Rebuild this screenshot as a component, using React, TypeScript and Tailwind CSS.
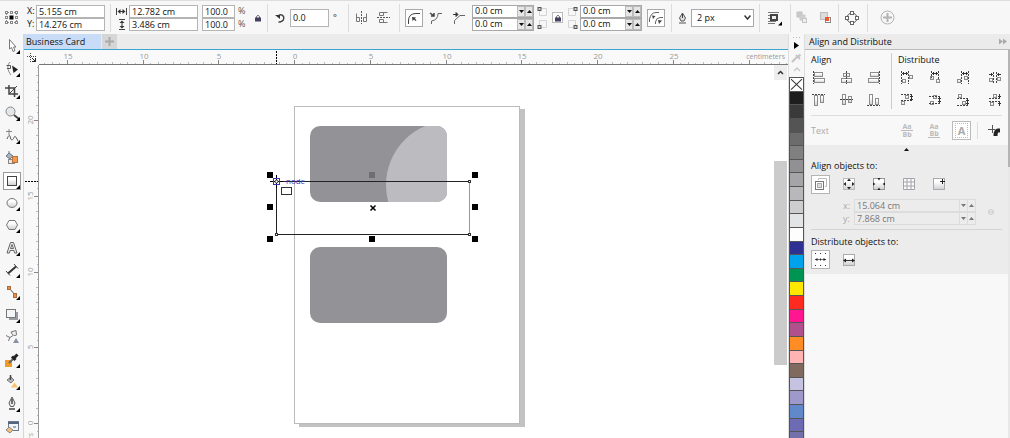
import React from "react";

type Box = [number, number, number, number];

interface Glyph {
    label: string;
    guide: string;
    boxes: Box[];
    arrows?: string;
}

const alignGlyphs: Glyph[] = [
    { label: "Align left", guide: "M1.5 0V13", boxes: [[2.5, 1.5, 8, 4], [2.5, 7.5, 10, 4]] },
    { label: "Align centers horizontally", guide: "M6.5 0V13", boxes: [[3.5, 2.5, 6, 3], [1.5, 7.5, 10, 4]] },
    { label: "Align right", guide: "M12.5 0V13", boxes: [[3.5, 1.5, 8, 4], [1.5, 7.5, 10, 4]] },
    { label: "Align top", guide: "M0 1.5H13", boxes: [[2.5, 2.5, 3, 10], [8.5, 2.5, 3, 7]] },
    { label: "Align centers vertically", guide: "M0 6.5H13", boxes: [[2.5, 1.5, 3, 10], [8.5, 3.5, 3, 6]] },
    { label: "Align bottom", guide: "M0 12.5H13", boxes: [[2.5, 1.5, 3, 10], [8.5, 5.5, 3, 6]] },
];

const distributeGlyphs: Glyph[] = [
    { label: "Distribute left", guide: "M1.5 0V13M8.5 0V13", boxes: [[2.5, 8.5, 3, 3], [9.5, 4.5, 3, 3]], arrows: "M2 2.5H8M3.5 1V4M6.5 1V4" },
    { label: "Distribute centers horizontally", guide: "M3.5 0V7M10.5 0V9", boxes: [[2.5, 5.5, 3, 3], [8.5, 8.5, 3, 3]], arrows: "M4 2.5H10M5.5 1V4M8.5 1V4" },
    { label: "Distribute right", guide: "M5.5 0V13M12.5 0V13", boxes: [[1.5, 8.5, 3, 3], [8.5, 5.5, 3, 3]], arrows: "M6 2.5H12M7.5 1V4M10.5 1V4" },
    { label: "Distribute spacing horizontally", guide: "M5.5 1V12M8.5 1V12", boxes: [[1.5, 7.5, 3, 3], [9.5, 6.5, 3, 3]], arrows: "M1 3.5H5M3.5 2V5M9 3.5H13M10.5 2V5" },
    { label: "Distribute top", guide: "M1 1.5H13M1 7.5H13", boxes: [[5.5, 2.5, 3, 3], [1.5, 8.5, 3, 3]], arrows: "M11.5 2V8M10 3.5H13M10 6.5H13" },
    { label: "Distribute centers vertically", guide: "M1 3.5H13M1 10.5H13", boxes: [[5.5, 2.5, 3, 3], [2.5, 8.5, 3, 3]], arrows: "M11.5 4V10M10 5.5H13M10 8.5H13" },
    { label: "Distribute bottom", guide: "M1 5.5H13M1 12.5H13", boxes: [[2.5, 1.5, 3, 3], [6.5, 8.5, 3, 3]], arrows: "M11.5 6V12M10 7.5H13M10 10.5H13" },
    { label: "Distribute spacing vertically", guide: "M1 5.5H13M1 8.5H13", boxes: [[5.5, 1.5, 3, 3], [2.5, 9.5, 3, 3]], arrows: "M11.5 1V5M10 3.5H13M11.5 9V13M10 10.5H13" },
];

const swatches = [
    "#1e1e1e", "#3a3a3a", "#545454", "#6c6c6c", "#808080", "#919193", "#a5a5a7", "#b8b8ba", "#cdcdcf",
    "#e3e4e6", "#fdfdfd", "#2e3192", "#00a2ec", "#009453", "#ffe800", "#ff2a20", "#ff1690", "#b0508c",
    "#ff8c24", "#ffb3b3", "#806a60", "#c6c2e2", "#9f99cb", "#6288cc", "#6c6bb4", "#7271ac",
];

const Svg = ({ w, h, children, className }: { w: number; h: number; children: React.ReactNode; className?: string }) => (
    <svg width={w} height={h} viewBox={`0 0 ${w} ${h}`} fill="none" stroke="#555" className={className} aria-hidden="true">
        {children}
    </svg>
);

const GlyphIcon = ({ glyph }: { glyph: Glyph }) => (
    <Svg w={14} h={14}>
        {glyph.boxes.map(([x, y, w, h], i) => (
            <rect key={i} x={x} y={y} width={w} height={h} fill="url(#toolFill)" stroke="#8c8c8c" />
        ))}
        <path d={glyph.guide} stroke="#444" strokeDasharray="2 1" />
        {glyph.arrows && <path d={glyph.arrows} stroke="#333" />}
    </Svg>
);

/* Tool drawings, all on a 16px grid */
const tools: { label: string; flyout?: boolean; active?: boolean; art: React.ReactNode }[] = [
    { label: "Pick", flyout: true, art: <path d="M5.5 1.5V11L7.5 9.500L9 13.500L11 12.500L9.500 9H12Z" fill="#fff" stroke="#777" /> },
    { label: "Shape", flyout: true, art: <><path d="M6 1C3 4 3 9 7 14" stroke="#888" /><path d="M2.500 4.500H6.500V7.500H3" stroke="#555" /><path d="M8 4.500L14 8.500L9.500 12Z" fill="#222" stroke="none" /></> },
    { label: "Crop", flyout: true, art: <><path d="M1 5H10.500V14M5 2V11H14" stroke="#444" strokeWidth="1.500" /><path d="M5 11L13 3" stroke="#444" /></> },
    { label: "Zoom", flyout: true, art: <><circle cx="6.500" cy="6.500" r="4.500" fill="#e4e7ea" stroke="#888" /><path d="M10 10L15 14" stroke="#444" strokeWidth="2" /></> },
    { label: "Freehand", flyout: true, art: <><path d="M2 3.500H8M5 1V7" stroke="#888" /><path d="M3 11C5 6 6 7 6.500 10S9 12 10 9.500S12 9 14 13" stroke="#555" /></> },
    { label: "Smart fill", art: <><path d="M2 6L5 3L9 6L6 9Z" fill="#a9b4c0" stroke="#678" /><path d="M5 3V1" stroke="#678" /><rect x="4.500" y="9.500" width="6" height="4" fill="#f5e3d3" stroke="#888" /><rect x="8.500" y="6.500" width="5" height="6" fill="#f29a50" stroke="#b8703c" /></> },
    { label: "Rectangle", flyout: true, active: true, art: <rect x="3.500" y="3.500" width="9" height="9" fill="url(#toolFill)" stroke="#444" /> },
    { label: "Ellipse", flyout: true, art: <ellipse cx="8" cy="8" rx="5" ry="4.500" fill="url(#toolFill)" stroke="#777" /> },
    { label: "Polygon", flyout: true, art: <path d="M2.500 8L5 3.500H11L13.500 8L11 12.500H5Z" fill="url(#toolFill)" stroke="#777" /> },
    { label: "Text", flyout: true, art: <path d="M3 13L6.500 2.500H9.500L13 13H10.500L10 10.500H6L5.500 13ZM6.500 8.500H9.500L8 4.500Z" fill="#eee" stroke="#666" /> },
    { label: "Parallel dimension", flyout: true, art: <><path d="M4 11.500L12 4.500" stroke="#333" strokeWidth="2" /><path d="M2 9L6 13.500M10 2L14 6.500" stroke="#444" /></> },
    { label: "Connector", flyout: true, art: <><path d="M6 5L11 11" stroke="#555" /><rect x="3.500" y="2.500" width="3" height="3" fill="#f08a3c" stroke="#a86a40" /><rect x="9.500" y="9.500" width="3" height="4" fill="#f08a3c" stroke="#a86a40" /></> },
    { label: "Drop shadow", flyout: true, art: <><path d="M5 5H14V13H5Z" fill="#9a9aa2" stroke="none" /><rect x="2.500" y="2.500" width="9" height="8" fill="#f4f5f8" stroke="#777" /></> },
    { label: "Transparency", art: <><path d="M7 3L12 1.500L12.500 6Q9 8 7 3ZM9 6.500L6 8.500M2 6.500L6 8.500L4.500 12" stroke="#777" fill="#eee" /><path d="M9 14L12 9L15 14Z" fill="#8792a4" stroke="none" /></> },
    { label: "Color eyedropper", flyout: true, art: <><rect x="1" y="8" width="7" height="7" fill="#f09a28" stroke="none" /><path d="M5 11L10 6" stroke="#667" strokeWidth="2" /><path d="M8 4.500L11.500 8M10 6L13.500 2.500" stroke="#222" strokeWidth="3" /></> },
    { label: "Interactive fill", flyout: true, art: <><path d="M3 6L7 3L10 6L7 9Z" fill="#b9bdc0" stroke="#777" /><path d="M6.500 1V6" stroke="#444" strokeWidth="1.500" /><path d="M7 13.500L10.500 8.500L14 13.500Z" fill="#f7c469" stroke="none" /></> },
    { label: "Outline pen", flyout: true, art: <><path d="M8 1L5 7L6.500 10.500H9.500L11 7Z" fill="#eee" stroke="#555" /><path d="M8 3V8M5 13H11" stroke="#444" strokeWidth="1.500" /></> },
    { label: "Edit fill", art: <><rect x="4.500" y="2.500" width="10" height="9" fill="#f2f4f8" stroke="#6b7a91" /><path d="M4 4H15" stroke="#56657e" strokeWidth="2" /><path d="M9 8H12" stroke="#56657e" /><path d="M2 11L5 8L9 11L6 14Z" fill="#f4bd75" stroke="#888" /></> },
];

const Arrow = ({ up }: { up?: boolean }) => (
    <svg width="5" height="3" viewBox="0 0 5 3" aria-hidden="true">
        <path d={up ? "M0 3L2.500 0L5 3Z" : "M0 0L2.500 3L5 0Z"} fill="currentColor" />
    </svg>
);

const Field = ({ label, value, className }: { label: string; value: string; className: string }) => (
    <input aria-label={label} defaultValue={value} className={`min-w-0 border border-[#b4b4b4] bg-white px-[2px] outline-none ${className}`} />
);

const SpinField = ({ label, value }: { label: string; value: string }) => (
    <div className="flex h-[13px] w-[62px] items-center border border-[#a8a8a8] bg-white">
        <input aria-label={label} defaultValue={value} className="min-w-0 flex-1 pl-[2px] outline-none" />
        <button aria-label={`Decrease ${label}`} className="grid h-full w-[8px] place-items-center border border-[#bbb] bg-[#e6e6e6]"><Arrow /></button>
        <button aria-label={`Increase ${label}`} className="grid h-full w-[8px] place-items-center border border-[#bbb] bg-[#e6e6e6]"><Arrow up /></button>
    </div>
);

const Group = ({ className, children }: { className: string; children: React.ReactNode }) => (
    <div className={`flex h-[28px] shrink-0 items-center border-r border-[#dcdcdc] ${className}`}>{children}</div>
);

const Lock = () => (
    <Svg w={8} h={8}>
        <path d="M2.500 4V2.500Q4 0 5.500 2.500V4" stroke="#666" />
        <rect x="1" y="3.500" width="6" height="4" fill="#45405f" stroke="none" />
    </Svg>
);

const Corners = ({ flip }: { flip?: boolean }) => (
    <Svg w={10} h={24} className={flip ? "-scale-x-100" : ""}>
        <path d="M3 2.500H9.500V9.500H2.500V5M2.500 19V14.500H9.500V21.500H5" stroke="#d4d4d4" />
        <rect x="1" y="1.500" width="3" height="3" fill="#ccc" stroke="#555" />
        <rect x="1" y="19.500" width="3" height="3" fill="#ccc" stroke="#555" />
    </Svg>
);

const PropertyBar = () => (
    <header className="flex h-[34px] shrink-0 items-center overflow-hidden border-t border-[#dedede] bg-[#f7f7f7]">
        <Group className="w-[111px] gap-[8px] pl-[4px]">
            <button aria-label="Object origin">
                <Svg w={15} h={15}>
                    <path d="M2 2.500H13M2 12.500H13M2.500 2V13M12.500 2V13" stroke="#888" strokeDasharray="1 1" />
                    {[1.5, 6.5, 11.5].map((x) => [1.5, 6.5, 11.5].map((y) => (
                        <rect key={`${x}-${y}`} x={x} y={y} width="2" height="2" fill="#fff" stroke="#888" />
                    )))}
                    <rect x="5.500" y="5.500" width="4" height="4" fill="#000" stroke="none" />
                </Svg>
            </button>
            <div className="grid grid-cols-[9px_69px] items-center">
                <span aria-hidden="true">X:</span><Field label="X position" value="5.155 cm" className="h-[13px]" />
                <span aria-hidden="true">Y:</span><Field label="Y position" value="14.276 cm" className="h-[13px]" />
            </div>
        </Group>
        <Group className="w-[157px] pl-[5px]">
            <div className="grid grid-cols-[13px_69px] items-center">
                <Svg w={11} h={9}><path d="M.5 1V8M10.500 1V8" stroke="#444" /><path d="M1.500 4.500L4.500 2V7ZM9.500 4.500L6.500 2V7Z" fill="#333" stroke="none" /><path d="M3 4.500H8" stroke="#333" /></Svg>
                <Field label="Object width" value="12.782 cm" className="h-[13px]" />
                <Svg w={11} h={11}><path d="M3 .5H9M3 10.500H9" stroke="#444" /><path d="M6 1.500L3.500 4H8.500ZM6 9.500L3.500 7H8.500Z" fill="#333" stroke="none" /><path d="M6 3V8" stroke="#333" /></Svg>
                <Field label="Object height" value="3.486 cm" className="h-[13px]" />
            </div>
            <div className="ml-[4px] grid grid-cols-[33px_8px] items-center gap-x-[3px]">
                <Field label="Horizontal scale" value="100.0" className="h-[13px]" /><span className="text-[#555]">%</span>
                <Field label="Vertical scale" value="100.0" className="h-[13px]" /><span className="text-[#555]">%</span>
            </div>
            <button aria-label="Lock ratio" className="ml-[8px]"><Lock /></button>
        </Group>
        <Group className="w-[81px] gap-[4px] pl-[7px]">
            <Svg w={11} h={12}><path d="M2.500 4.500Q6 1 8.500 4.500Q10 8.500 5 10H3.500" stroke="#444" strokeWidth="1.500" /><path d="M0 3H5V7Z" fill="#333" stroke="none" /></Svg>
            <Field label="Angle of rotation" value="0.0" className="h-[18px] w-[39px]" />
            <span>°</span>
        </Group>
        <Group className="w-[51px] gap-[9px] pl-[6px]">
            <button aria-label="Mirror horizontally"><Svg w={13} h={13}><path d="M1.500 2.500V10.500H4.500V6.500M8.500 6.500V10.500H11.500V2.500M1.500 6.500H4.500M8.500 6.500H11.500" stroke="#777" /><path d="M6.500 0V13" strokeDasharray="2 1" /></Svg></button>
            <button aria-label="Mirror vertically"><Svg w={13} h={13}><path d="M10.500 1.500H2.500V4.500H6.500M6.500 8.500H2.500V11.500H10.500M6.500 1.500V4.500M6.500 8.500V11.500" stroke="#777" /><path d="M0 6.500H13" strokeDasharray="2 1" /></Svg></button>
        </Group>
        <Group className="w-[272px] pl-[5px]">
            <button aria-label="Round corner" className="grid size-[18px] place-items-center border border-[#a8a8a8] bg-white">
                <Svg w={14} h={14}><path d="M1.500 13V9Q2 2.500 9 2.500H13" stroke="#444" /><path d="M5 6L9 6.500L8 7.500L9.500 9.500L8.500 10L7 8.500L5.500 10Z" fill="#444" stroke="none" /></Svg>
            </button>
            <button aria-label="Scalloped corner" className="ml-[6px]">
                <Svg w={14} h={14}><path d="M2.500 13V10Q9 9 9 2.500H13" stroke="#666" /><path d="M1 2L5 5M5 2V5H2" stroke="#444" strokeWidth="1.500" /></Svg>
            </button>
            <button aria-label="Chamfered corner" className="ml-[9px]">
                <Svg w={14} h={14}><path d="M2.500 13V9.500L8 4.500H13" stroke="#666" /><path d="M1 3.500H5M4 1.500L6 3.500L4 5.500Z" fill="#333" stroke="#333" /></Svg>
            </button>
            <div className="ml-[6px]">
                <SpinField label="top left radius" value="0.0 cm" />
                <SpinField label="bottom left radius" value="0.0 cm" />
            </div>
            <div className="ml-[3px]"><Corners /></div>
            <button aria-label="Edit corners together" className="ml-[5px] grid size-[11px] place-items-center border border-[#bbb] bg-white"><Lock /></button>
            <div className="ml-[5px]"><Corners flip /></div>
            <div className="ml-[2px]">
                <SpinField label="top right radius" value="0.0 cm" />
                <SpinField label="bottom right radius" value="0.0 cm" />
            </div>
            <button aria-label="Relative corner scaling" className="ml-[5px] grid size-[18px] place-items-center border border-[#a8a8a8] bg-white">
                <Svg w={16} h={16}><path d="M1.500 12V9Q3 2.500 8 2.500H11M7.500 14V12Q8 8 12 7.500H15" stroke="#666" /><path d="M4 5.500L7.500 6L5 9ZM10 10L14 10.500L11 14Z" fill="#444" stroke="none" /></Svg>
            </button>
        </Group>
        <Group className="w-[88px] gap-[4px] pl-[6px]">
            <Svg w={9} h={12}><path d="M4.500 1L1.500 6L3 9H6L7.500 6ZM1 11H8" fill="#ddd" stroke="#555" /><path d="M4.500 2V6" stroke="#444" /></Svg>
            <div className="grid items-center">
                <select aria-label="Outline width" className="col-start-1 row-start-1 h-[18px] w-[63px] appearance-none border border-[#a8a8a8] bg-white pl-[5px]">
                    <option>2 px</option>
                </select>
                <Svg w={7} h={5} className="pointer-events-none col-start-1 row-start-1 mr-[3px] justify-self-end"><path d="M.5 .5L3.500 4L6.500 .5" stroke="#333" strokeWidth="1.500" /></Svg>
            </div>
        </Group>
        <Group className="w-[31px] pl-[7px]">
            <button aria-label="Wrap text">
                <Svg w={15} h={16}><path d="M1 2.500H12M1 5.500H3M1 8.500H3M1 11.500H9M1 13.500H8" stroke="#777" /><rect x="4" y="5" width="6" height="5" fill="#eee" stroke="#444" strokeWidth="2" /><path d="M15 11.500V15.500H11Z" fill="#000" stroke="none" /></Svg>
            </button>
        </Group>
        <Group className="w-[48px] gap-[11px] pl-[5px]">
            <button aria-label="To front" disabled><Svg w={12} h={13}><rect x="1" y="1" width="5" height="5" fill="#c8c8c8" stroke="#c4c4c4" /><path d="M4 4H9V9H4Z" fill="#d0d0d0" stroke="#c8c8c8" /><rect x="6.500" y="7.500" width="4" height="4" fill="#eee" stroke="#c4c4c4" /></Svg></button>
            <button aria-label="To back"><Svg w={13} h={13}><rect x="1.500" y="1.500" width="7" height="7" fill="#ddd" stroke="#bbb" /><rect x="6.500" y="6.500" width="5" height="5" fill="#fff" stroke="#888" /><rect x="6" y="6" width="4" height="4" fill="#f0562c" stroke="none" /></Svg></button>
        </Group>
        <Group className="w-[29px] pl-[6px]">
            <button aria-label="Convert to curves"><Svg w={14} h={14}><circle cx="7" cy="7" r="5" stroke="#555" />{[[7, 2], [12, 7], [7, 12], [2, 7]].map(([x, y]) => <rect key={`${x}${y}`} x={x - 1.5} y={y - 1.5} width="3" height="3" fill="#fff" stroke="#666" />)}</Svg></button>
        </Group>
        <button aria-label="Customize" className="ml-[12px]"><Svg w={15} h={15}><circle cx="7.500" cy="7.500" r="6.500" stroke="#b4b4b4" /><path d="M7.500 3V12M3 7.500H12" stroke="#b4b4b4" strokeWidth="2" /></Svg></button>
    </header>
);

const Toolbox = () => (
    <nav aria-label="Toolbox" className="flex w-[24px] shrink-0 flex-col border-r border-[#d6d6d6] bg-[#f7f7f7] pt-px">
        {tools.map((tool) => (
            <div key={tool.label} className="flex min-h-0 flex-1 items-center pl-[3px]">
                <button aria-label={tool.label} className={`flex h-[18px] w-[18px] items-center border ${tool.active ? "border-[#999] bg-white" : "border-transparent"}`}>
                    <Svg w={16} h={16} className="shrink-0">
                        {tool.art}
                        {tool.flyout && <path d="M16 12V16H12Z" fill="#000" stroke="none" />}
                    </Svg>
                </button>
            </div>
        ))}
    </nav>
);

/* One tick per half centimetre; the long ones and their numbers come every five centimetres */
const CM = 15.15;
const ticksFrom = (first: number, count: number) => Array.from({ length: count }, (_, i) => first + i / 2);

const TopRuler = () => (
    <svg className="h-[14px] min-w-0 flex-1 border-b border-[#777] bg-[#f9f9f9]" aria-hidden="true">
        {ticksFrom(-16.5, 99).map((cm) => (
            <path key={cm} d={`M${Math.round(255 + cm * CM) + 0.5} ${cm % 5 === 0 ? 9 : cm % 1 === 0 ? 11 : 12}V13`} stroke={cm % 5 === 0 ? "#888" : "#bbb"} />
        ))}
        {[-15, -10, -5, 0, 5, 10, 15, 20, 25].map((cm) => (
            <text key={cm} x={Math.round(256 + cm * CM)} y="8" textAnchor="middle" fontSize="8" fill="#999">{Math.abs(cm)}</text>
        ))}
        <text x="746" y="8" textAnchor="end" fontSize="7" fill="#999">centimeters</text>
        <path d="M237.500 0V13" stroke="#000" strokeDasharray="2 1" />
    </svg>
);

const SideRuler = () => (
    <svg className="h-full w-[15px] shrink-0 border-r border-[#999] bg-[#f9f9f9]" aria-hidden="true">
        {ticksFrom(-1, 50).map((cm) => (
            <path key={cm} d={`M${cm % 5 === 0 ? 10 : cm % 1 === 0 ? 12 : 13} ${Math.round(358 - cm * CM) + 0.5}H14`} stroke={cm % 5 === 0 ? "#888" : "#bbb"} />
        ))}
        {[20, 15, 10, 5, 0].map((cm) => (
            <text key={cm} transform={`translate(9 ${Math.round(358 - cm * CM)}) rotate(-90)`} textAnchor="middle" fontSize="8" fill="#999">{cm}</text>
        ))}
        <text transform="translate(9 368) rotate(-90)" textAnchor="end" fontSize="7" fill="#999">centimeters</text>
        <path d="M1 116.500H14" stroke="#000" strokeDasharray="2 1" />
    </svg>
);

const Canvas = () => (
    <svg className="h-full min-w-0 flex-1 bg-white" role="img" aria-label="Business card drawing">
        <clipPath id="card"><rect x="271" y="61" width="137" height="76" rx="10" /></clipPath>
        <rect x="260" y="44" width="226" height="318" fill="#c2c2c2" />
        <rect x="255.500" y="41.500" width="225" height="317" fill="#fff" stroke="#bbb" />
        <g clipPath="url(#card)">
            <rect x="271" y="61" width="137" height="76" fill="#939297" />
            <circle cx="411" cy="120" r="64" fill="#bcbbbf" />
        </g>
        <rect x="271" y="182" width="137" height="76" rx="10" fill="#939297" />
        <path d="M431 116.500H237.500V169.500H431" fill="none" stroke="#222" />
        <path d="M430.500 117V169" stroke="#999" />
        {[231, 333, 436].map((x) => [110, 142, 174].map((y) => (
            x === 333 && y === 142 ? null : <rect key={`${x}-${y}`} x={x - 3} y={y - 3} width="6" height="6" fill={x === 333 && y === 110 ? "#6f6e72" : "#000"} />
        )))}
        <path d="M331.500 140.500L336.500 145.500M336.500 140.500L331.500 145.500" stroke="#000" strokeWidth="1.500" />
        {[[430.5, 116.5], [237.5, 169.5], [430.5, 169.5]].map(([x, y]) => (
            <rect key={`${x}-${y}`} x={x - 1} y={y - 1} width="2" height="2" fill="#fff" stroke="#333" />
        ))}
        <path d="M231 116.500H244M237.500 110V123" stroke="#000" />
        <rect x="234.500" y="113.500" width="6" height="6" fill="none" stroke="#3a36b8" />
        <circle cx="237.500" cy="116.500" r="1.500" fill="#fff" stroke="#333" />
        <rect x="242.500" y="122.500" width="10" height="7" fill="#fff" stroke="#333" />
        <text x="247" y="119" fontSize="8" fill="#3a36b8">node</text>
    </svg>
);

const Palette = () => (
    <div className="flex w-[17px] shrink-0 flex-col items-center overflow-hidden border-x border-[#ddd] bg-[#f7f7f7]">
        <div className="flex h-[43px] shrink-0 flex-col items-center justify-between pt-[3px] pb-[5px]">
            <Svg w={10} h={1}><path d="M1 .5H9" stroke="#bbb" strokeDasharray="1 2" /></Svg>
            <button aria-label="Palette menu"><Svg w={6} h={7}><path d="M0 0L5 3.500L0 7Z" fill="#000" stroke="none" /></Svg></button>
            <Svg w={11} h={10}><path d="M1 9L6 4" stroke="#c4c4c4" strokeWidth="2" /><path d="M5 2L9 6M7 4L9.500 1.500" stroke="#c4c4c4" strokeWidth="2" /></Svg>
            <button aria-label="Scroll palette up"><Svg w={8} h={5}><path d="M1 4L4 1L7 4" stroke="#ccc" strokeWidth="1.500" /></Svg></button>
        </div>
        <div className="-mb-2 flex min-h-0 w-full flex-1 flex-col border-x border-[#555] bg-[#555]">
            <button aria-label="No color" className="min-h-0 flex-1 border-y border-[#555] bg-white">
                <svg className="size-full" viewBox="0 0 13 12" preserveAspectRatio="none" aria-hidden="true"><path d="M1 1L12 11M12 1L1 11" stroke="#333" /></svg>
            </button>
            {swatches.map((color) => (
                <button key={color} aria-label={color} className="min-h-0 flex-1 border-b border-[#555]" style={{ backgroundColor: color }} />
            ))}
        </div>
    </div>
);

const DimSpin = ({ axis, value }: { axis: string; value: string }) => (
    <div className="flex h-[13px] items-center gap-[4px] text-[#777]">
        <label htmlFor={`ref-${axis}`} className="w-[7px] text-[#aaa]">{axis}:</label>
        <div className="flex h-full w-[122px] items-center border border-[#dcdcdc]">
            <input id={`ref-${axis}`} disabled defaultValue={value} className="min-w-0 flex-1 pl-[2px]" />
            <button disabled aria-label={`Decrease ${axis}`} className="grid h-full w-[8px] place-items-center border-l border-[#dcdcdc]"><Arrow /></button>
            <button disabled aria-label={`Increase ${axis}`} className="grid h-full w-[8px] place-items-center border-l border-[#dcdcdc]"><Arrow up /></button>
        </div>
    </div>
);

const pressed = "grid size-[19px] place-items-center border border-[#b4b4b4] bg-white";

const AlignPanel = () => (
    <aside className="flex w-[205px] shrink-0 flex-col bg-[#f8f8f8]">
        <div className="flex h-[16px] items-center justify-between border-b border-[#bbb] bg-[#ebebeb] pr-[3px] pl-[4px]">
            <h2>Align and Distribute</h2>
            <Svg w={8} h={7}><path d="M0 .5L4 3.500L0 6.500ZM4 .5L8 3.500L4 6.500Z" fill="#aaa" stroke="none" /></Svg>
        </div>
        <div className="flex flex-1">
            <div className="flex min-w-0 flex-1 flex-col">
                <div className="mx-[6px] flex h-[66px] border-b border-[#ddd] pt-[3px]">
                    <section className="h-[56px] w-[81px] border-r border-[#ccc]">
                        <h3 className="leading-[13px]">Align</h3>
                        <div className="mt-[5px] grid grid-cols-[28px_27px_14px] gap-y-[8px] pl-px">
                            {alignGlyphs.map((glyph) => <button key={glyph.label} aria-label={glyph.label}><GlyphIcon glyph={glyph} /></button>)}
                        </div>
                    </section>
                    <section className="pl-[6px]">
                        <h3 className="leading-[13px]">Distribute</h3>
                        <div className="mt-[5px] grid grid-cols-[28px_28px_32px_14px] gap-y-[8px] pl-[2px]">
                            {distributeGlyphs.map((glyph) => <button key={glyph.label} aria-label={glyph.label}><GlyphIcon glyph={glyph} /></button>)}
                        </div>
                    </section>
                </div>
                <div className="flex h-[29px] items-center pl-[6px] text-[#aaa]">
                    <span className="w-[90px]">Text</span>
                    <button disabled aria-label="First line baseline" className="w-[12px] text-[7px] leading-[7px] font-bold text-[#bbb]">
                        <span className="block border-b border-[#bbb]">Aa</span>
                        <span className="block">Bb</span>
                    </button>
                    <button disabled aria-label="Last line baseline" className="ml-[15px] w-[12px] text-[7px] leading-[7px] font-bold text-[#bbb]">
                        <span className="block">Aa</span>
                        <span className="block border-b border-[#bbb]">Bb</span>
                    </button>
                    <button disabled aria-label="Bounding box" className="ml-[12px] grid size-[19px] place-items-center border border-[#bbb] bg-white text-[11px] leading-[13px] font-bold">
                        <span className="border border-dotted border-[#bbb] px-[2px]">A</span>
                    </button>
                    <span className="ml-[6px] h-[17px] border-l border-[#ddd]" />
                    <button aria-label="Outline" className="ml-[9px]"><Svg w={14} h={14}><path d="M1 5.500H8M5.500 1V9" stroke="#555" /><path d="M13 6.500H11Q8.500 6.500 8.500 12" stroke="#222" strokeWidth="4" /></Svg></button>
                </div>
                <div className="h-[129px] bg-[#ececec] pl-[6px]">
                    <div className="flex h-[13px] items-center justify-center pr-[6px] pb-[4px]"><Arrow up /></div>
                    <h3 className="leading-[15px]">Align objects to:</h3>
                    <div className="mt-px flex h-[20px] items-center gap-[12px]">
                        <button aria-label="Active objects" className={pressed}><Svg w={15} h={15}><path d="M5.500 3V1.500H13.500V9.500H12" stroke="#bbb" /><rect x="2.500" y="4.500" width="8" height="8" fill="#fff" stroke="#777" /><rect x="4.500" y="6.500" width="4" height="4" fill="#ddd" stroke="#aaa" /></Svg></button>
                        <div className="flex gap-[16px]">
                            <button aria-label="Page edge"><Svg w={14} h={14}><rect x="1.500" y="1.500" width="11" height="11" fill="url(#toolFill)" stroke="#bbb" /><path d="M7 1.500L9 4H5ZM7 12.500L5 10H9ZM1.500 7L4 5V9ZM12.500 7L10 9V5Z" fill="#222" stroke="none" /></Svg></button>
                            <button aria-label="Page center"><Svg w={14} h={14}><rect x="1.500" y="1.500" width="11" height="11" fill="url(#toolFill)" stroke="#999" /><path d="M7 3.500L5.500 1H8.500ZM7 10.500L8.500 13H5.500ZM3.500 7L1 8.500V5.500ZM10.500 7L13 5.500V8.500Z" fill="#222" stroke="none" /></Svg></button>
                            <button aria-label="Grid"><Svg w={14} h={14}><path d="M1.500 1.500H12.500V12.500H1.500ZM1 5H13M1 9H13M5 1V13M9 1V13" fill="#fafafa" stroke="#a4a4aa" /></Svg></button>
                            <button aria-label="Specified point"><Svg w={14} h={14}><rect x="1.500" y="1.500" width="11" height="11" fill="url(#toolFill)" stroke="#aaa" /><path d="M8 4.500H13M10.500 2V7" stroke="#222" /></Svg></button>
                        </div>
                    </div>
                    <div className="mt-[5px] flex h-[26px] items-center justify-between pr-[13px] pl-[32px]">
                        <div>
                            <DimSpin axis="x" value="15.064 cm" />
                            <DimSpin axis="y" value="7.868 cm" />
                        </div>
                        <Svg w={8} h={8}><circle cx="4" cy="4" r="2.500" stroke="#ccc" /><path d="M2 4H6" stroke="#ccc" /></Svg>
                    </div>
                    <h3 className="mt-[4px] mr-[6px] border-t border-[#d4d4d4] pt-[4px] leading-[15px]">Distribute objects to:</h3>
                    <div className="mt-px flex items-center gap-[12px]">
                        <button aria-label="Extent of selection" className={pressed}><Svg w={15} h={15}><path d="M2 1.500H14M2 13.500H14" stroke="#333" strokeDasharray="1 4" /><path d="M2 7.500H13" stroke="#777" /><path d="M2 7.500L4.500 6V9ZM13 7.500L10.500 6V9ZM7 6.500H8V8.500H7Z" fill="#222" stroke="none" /></Svg></button>
                        <button aria-label="Extent of page"><Svg w={14} h={14}><rect x="1.500" y="1.500" width="11" height="11" fill="url(#toolFill)" stroke="#aaa" /><path d="M3 7.500H11" stroke="#333" /><path d="M1 7.500L4 5.500V9.500ZM13 7.500L10 5.500V9.500Z" fill="#222" stroke="none" /></Svg></button>
                    </div>
                </div>
            </div>
            <div className="w-[2px] bg-[#e8e8e8]"><div className="h-[117px] bg-[#b4b4b4]" /></div>
        </div>
    </aside>
);

const App: React.FC = () => (
    <div className="flex h-screen flex-col overflow-hidden bg-white font-['Open_Sans','Noto_Sans',sans-serif] text-[9px] leading-[12px] text-[#111]">
        {/* Fill shared by the tool and panel icons */}
        <svg width="0" height="0" className="absolute" aria-hidden="true">
            <linearGradient id="toolFill" x1="0" y1="0" x2="0" y2="1"><stop offset="0.3" stopColor="#fff" /><stop offset="1" stopColor="#cfcfd4" /></linearGradient>
        </svg>
        <PropertyBar />
        <div className="flex min-h-0 flex-1">
            <Toolbox />
            <main className="flex min-w-0 flex-1 flex-col">
                <div className="flex h-[15px] shrink-0 gap-px bg-[#ebebeb]">
                    <button className="w-[77px] bg-[#c8dcf7] pl-[2px] text-left">Business Card</button>
                    <button aria-label="New document" className="grid w-[15px] place-items-center bg-[#d6d6d6]"><Svg w={9} h={9}><path d="M4.500 0V9M0 4.500H9" stroke="#aaa" strokeWidth="2" /></Svg></button>
                </div>
                <div className="flex h-[16px] shrink-0 border-t border-[#3ba5cf] bg-[#f9f9f9] pt-px">
                    <button aria-label="Ruler origin" className="grid w-[15px] place-items-center"><Svg w={10} h={10}><path d="M3.500 0V9M0 3.500H9" stroke="#444" strokeDasharray="1 1" /><path d="M5 5L8.500 8.500M8.500 5V8.500H5" stroke="#222" /></Svg></button>
                    <TopRuler />
                </div>
                <div className="flex min-h-0 flex-1">
                    <SideRuler />
                    <Canvas />
                    <div className="flex w-[14px] shrink-0 flex-col pr-px">
                        <button aria-label="Scroll up" className="grid h-[15px] shrink-0 place-items-center bg-[#eee]"><Svg w={7} h={5}><path d="M1 4L3.500 1.500L6 4" stroke="#333" strokeWidth="1.500" /></Svg></button>
                        <div className="mt-[81px] h-[204px] bg-[#cbcbcb]" />
                    </div>
                </div>
            </main>
            <Palette />
            <AlignPanel />
        </div>
    </div>
);

export default App;
